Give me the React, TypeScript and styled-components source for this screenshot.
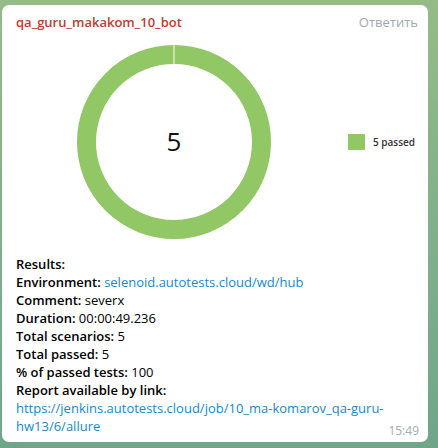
import React from "react";
import styled, { createGlobalStyle } from "styled-components";

const GlobalStyle = createGlobalStyle`
  html, body {
    margin: 0;
    padding: 0;
    width: 438px;
    height: 448px;
    overflow: hidden;
  }
  body {
    background: linear-gradient(180deg, #95bc86 0%, #82b28a 45%, #6fa68a 100%);
    font-family: "Open Sans", "Liberation Sans", sans-serif;
  }
`;

const Page = styled.div`
  width: 438px;
  height: 448px;
  padding: 5px 10px 0 2px;
  box-sizing: border-box;
`;

const Bubble = styled.div`
  position: relative;
  background: #fff;
  border-radius: 7px;
  height: 437px;
  box-sizing: border-box;
  padding: 8px 10px 0 14px;
  display: flex;
  flex-direction: column;
`;

const Header = styled.div`
  display: flex;
  justify-content: space-between;
  align-items: center;
  height: 18px;
  font-size: 13px;
  line-height: 18px;
`;

const Sender = styled.span`
  color: #c03d33;
  font-weight: 600;
`;

const Reply = styled.span`
  color: #a0a9b1;
`;

const ChartRow = styled.div`
  display: flex;
  align-items: center;
  margin-top: 13px;
  padding-left: 60px;
`;

const Legend = styled.div`
  display: flex;
  align-items: center;
  gap: 8px;
  margin-left: 76px;
  font-size: 10px;
  font-weight: 600;
  color: #333;
`;

const Swatch = styled.span`
  width: 17px;
  height: 16px;
  background: #91c765;
`;

const Body = styled.div`
  margin-top: 15px;
  font-size: 13px;
  line-height: 18px;
  color: #000;
`;

const Line = styled.div``;

const Label = styled.span`
  font-weight: 600;
`;

const Link = styled.span`
  color: #168acd;
`;

const Time = styled.span`
  position: absolute;
  right: 9px;
  bottom: 3px;
  font-size: 12px;
  color: #a0acb6;
`;

function Donut() {
  const r = 87.5;
  return (
    <svg width="196" height="196" viewBox="0 0 196 196">
      <circle cx="98" cy="98" r={r} fill="none" stroke="#91c765" strokeWidth="19" />
      <line x1="98" y1="0" x2="98" y2="20" stroke="#fff" strokeWidth="1" />
      <text
        x="98"
        y="107"
        textAnchor="middle"
        fontSize="26"
        fontFamily="'Open Sans', 'Liberation Sans', sans-serif"
        fill="#111"
      >
        5
      </text>
    </svg>
  );
}

export default function App() {
  return (
    <>
      <GlobalStyle />
      <Page>
        <Bubble>
          <Header>
            <Sender>qa_guru_makakom_10_bot</Sender>
            <Reply>Ответить</Reply>
          </Header>
          <ChartRow>
            <Donut />
            <Legend>
              <Swatch />
              <span>5 passed</span>
            </Legend>
          </ChartRow>
          <Body>
            <Line><Label>Results:</Label></Line>
            <Line>
              <Label>Environment: </Label>
              <Link>selenoid.autotests.cloud/wd/hub</Link>
            </Line>
            <Line><Label>Comment: </Label>severx</Line>
            <Line><Label>Duration: </Label>00:00:49.236</Line>
            <Line><Label>Total scenarios: </Label>5</Line>
            <Line><Label>Total passed: </Label>5</Line>
            <Line><Label>% of passed tests: </Label>100</Line>
            <Line><Label>Report available by link:</Label></Line>
            <Line>
              <Link>https://jenkins.autotests.cloud/job/10_ma-komarov_qa-guru-hw13/6/allure</Link>
            </Line>
          </Body>
          <Time>15:49</Time>
        </Bubble>
      </Page>
    </>
  );
}
